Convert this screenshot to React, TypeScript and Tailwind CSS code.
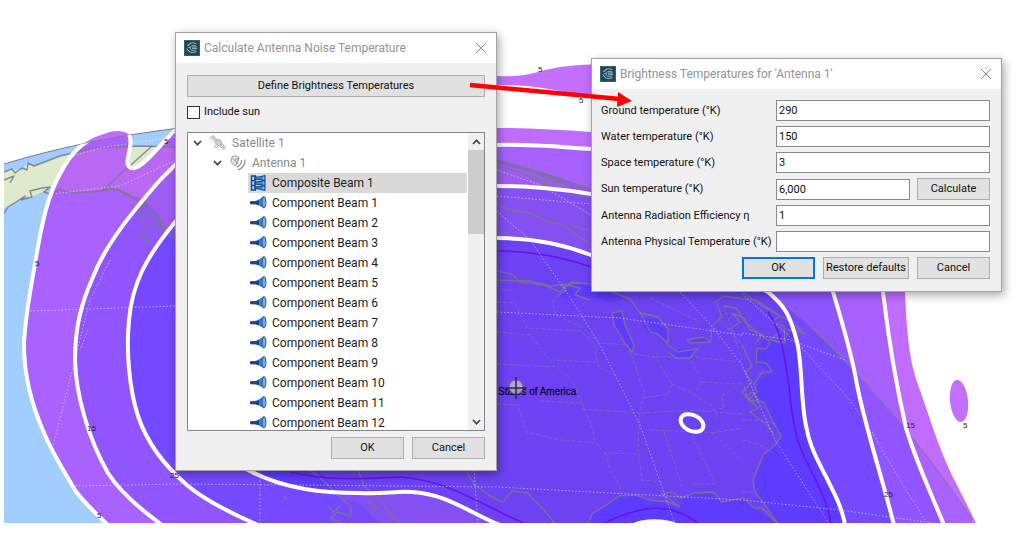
import { useState } from 'react'

var bandEdges = {
  outer: 'M108 525 C94 512 82 500 75 490 C62 468 52 452 45 435 C30 402 24 370 24 345 C25 315 31 288 36 258 C42 222 48 195 60 174 C72 150 86 139 104 134 C113 130 125 130 129 135 C133 141 129 150 128 158 C126 165 129 169 135 168 C147 163 158 147 175 130 C230 70 400 124 497 128 C530 128 560 130 591 132 C760 150 898 170 905 292 C907 335 909 362 920 390 C932 425 942 458 958 487 L977 525 Z',
  b: 'M162 525 C140 509 120 492 108 473 C88 438 76 395 75 360 C75 325 82 302 93 277 C106 243 135 209 160 180 L176 164 C240 120 400 143 497 145 C530 144 560 147 591 149 C760 160 865 200 883 292 C888 335 895 380 906 428 C914 455 925 480 944 525 Z',
  c: 'M258 525 C228 512 205 500 188 486 C160 462 146 440 138 416 C129 388 126 350 129 320 C132 285 145 258 176 221 C240 160 400 184 497 186 C530 186 560 189 591 194 C740 215 818 235 833 292 C843 325 853 360 857 385 C866 430 880 470 894 525 Z',
  d: 'M248 470 C285 490 325 493 360 493 C385 494 395 491 412 492 C447 494 468 512 500 525 L634 525 C644 520 664 520 676 525 L845 525 C840 493 812 460 807 430 C800 405 803 360 796 338 C790 316 785 306 768 292 C720 270 640 265 591 255 C560 243 530 238 497 238 C400 240 260 300 248 470 Z',
}

var bands = [
  { fill: '#ab3cff', d: bandEdges.outer + bandEdges.b },
  { fill: '#8a2cff', d: bandEdges.b + bandEdges.c },
  { fill: '#661cff', d: bandEdges.c + bandEdges.d },
  { fill: '#450aff', d: bandEdges.d },
]

var horizonArc = 'M4 164 C60 147 120 135 180 128 C290 118 400 130 497 160 C620 190 700 240 772 295 C800 315 830 345 853 370 C890 410 930 455 977 527'
var horizon = horizonArc + ' L4 527 Z'

var alaska = 'M4 172 L12 169 L22 170 L28 163 L34 166 L60 156 L95 148 L140 146 L175 147 L230 140 L230 270 L165 232 L158 214 L148 205 L138 199 L125 192 L112 190 L98 191 L72 193 L60 190 L54 192 L50 187 L40 193 L30 198 L25 196 L16 202 L4 208 Z'

var usa = 'M497 163 L530 172 L560 183 L591 197 L772 296 L806 334 L790 330 L783 345 L766 338 L757 348 L756 362 L772 372 L760 380 L754 392 L764 402 L772 420 L781 436 L775 445 L763 455 L757 470 L753 480 L755 492 L765 505 L779 525 L754 508 L744 498 L732 500 L722 502 L713 492 L694 493 L681 498 L680 507 L668 502 L650 500 L636 495 L619 496 L608 504 L592 514 L588 525 L480 525 L400 525 L380 523 L358 502 L345 500 L320 470 L400 300 Z'

var lakes = [
  'M556 296 L566 288 L575 282 L590 284 L612 292 L624 298 L612 303 L596 298 L580 297 L566 299 Z',
  'M612 313 L622 311 L625 325 L634 345 L632 352 L624 342 L614 325 Z',
  'M638 317 L658 319 L668 331 L667 341 L656 333 L648 333 Z',
  'M671 354 L682 348 L697 350 L690 357 L677 358 Z',
  'M687 340 L704 337 L711 342 L690 343 Z',
]

var coasts = [
  'M4 172 L12 169 L15 173 L22 168 L27 170 L28 163 L34 166 L60 156 L95 148 L140 146 L175 147',
  'M4 180 L14 176 L10 183 M4 214 L8 207 L16 202 L25 196 L21 200 L32 197 L30 191 L42 188 L50 187 L44 192 L54 195 L58 189 L72 193 L88 192 L100 191 L114 189 L128 194 L136 200 L146 203 L152 212 L160 222 L166 234 L176 240',
  'M152 146 L102 191',
  'M104 190 L110 187 L114 191 L118 189 L126 195 L138 198 L144 206 L138 210 L147 216 L151 214 L155 221 L160 218 L165 227 L172 230 L176 222',
  'M130 205 L140 212 L144 224 L153 230 L158 224 L166 238 M140 232 L148 236 L146 243 L141 238 Z',
  'M497 160 L530 171 L560 181 L591 190 M497 166 L520 172 L545 184 L591 198 M530 172 L556 177 L566 184 L540 180 Z',
  'M497 205 L512 210 L530 213 L548 222 L562 224 L572 232 L591 244 M574 226 L588 230',
  'M497 271 L512 274 L520 282 L545 285 L560 292 L572 282 L590 284 L612 292 L630 299 L640 313 L658 317 L668 329 L668 345 L678 352 L697 349 L690 358 L676 358 L668 352',
  'M490 280 L530 281 L550 286 L580 283 M556 297 L566 290 L562 284 L580 288 L575 295 L590 300 M612 313 L622 311 L625 325 L634 345 L632 352 L624 342 L614 325 Z',
  'M640 312 L650 332 L658 334 L667 343 M687 340 L704 337 L711 342 L690 343 L687 340 M711 340 L712 326 L722 317 L716 302 L724 296 L742 299',
  'M724 306 L736 308 L745 322 L760 334 L770 342 L766 349 L757 348 L756 362 L766 363 L772 372 L762 372 L754 384 L757 392 L748 400 L764 402 L772 420 L781 436 L775 445 L763 455 L757 470 L753 480 L755 492 L765 505 L779 525',
  'M742 299 L756 300 L774 312 L792 323 L806 334 L788 330 M728 330 L740 322 L732 313 L744 318 L750 330 L762 334 L756 343 M740 290 L762 306 L780 316 L772 322 L784 326 L785 343 L770 340 L780 332',
  'M742 345 L752 366 L745 372 L752 382 L742 392 L758 408 L750 412 L766 424 L774 434 M745 398 L752 392 L758 400 M744 386 L748 400 L755 404',
  'M779 525 L762 508 L754 508 L744 498 L732 500 L722 502 L713 492 L694 493 L681 498 L672 492 L662 494 L680 507 L668 502 L650 500 L636 495 L619 496 L608 504 L592 514 L588 525',
  'M490 496 L503 502 L512 491 L528 493 L540 506 L555 523 M310 470 L325 482 L340 497 L352 508 L350 516 L338 512 L330 518 L342 523 M358 470 L364 486 L380 500 L392 516 L400 523',
  'M328 506 L334 512 L340 506 M368 500 L376 508 L372 514 M284 496 L287 500',
  'M466 470 L474 484 L490 496',
]

var borders = [
  'M497 302 L515 303 L527 328 L580 331 L594 343 L598 366 L617 376',
  'M497 332 L530 335 L550 360 L597 362 M497 364 L558 367 L572 380 L582 405',
  'M497 404 L518 405 L526 432 L560 440 L596 443 L604 453 L640 454',
  'M540 401 L582 403 L590 421 L596 443 M606 453 L610 470 L620 485 L620 496',
  'M582 409 L640 413 L690 410 L742 414 M640 413 L638 448 L642 480 L662 482',
  'M502 290 L514 290 M552 299 L556 315 L580 326 L600 343 L628 345 L644 392 L640 410',
  'M644 398 L668 394 L672 384 L655 357 L632 354 M672 384 L690 392 L712 406 L718 420',
  'M656 356 L690 359 L702 380 L696 392 M690 357 L742 362 M702 382 L742 384 M650 430 L712 433 L742 460',
  'M664 432 L682 486 M692 436 L708 468 L716 484 L690 484 M735 386 L722 396 L724 408 L712 410 M712 433 L742 428',
  'M742 420 L760 420 L776 424 M742 440 L758 444 L772 452 M650 298 L700 322 M742 492 L756 492 M724 306 L742 360 M718 318 L742 344',
]

var graticule = [
  'M60 160 L100 148 L140 142 L176 137',
  'M52 194 L120 186 L176 160',
  'M30 311 L176 306 M88 330 L80 350 M110 260 L90 300 L52 450',
  'M75 486 L176 484 L300 485 L497 487 L742 500 L840 510 L940 524',
  'M260 470 L260 524 M474 470 L478 524',
  'M497 170 L540 185 L591 215 M497 196 L591 204 M497 211 L530 240 L570 297 L600 345 L640 425 L675 524',
  'M497 312 L620 318 L742 335',
  'M680 292 L712 326 L742 365 L775 440 L828 522',
  'M742 333 L790 340 L845 360 M742 294 L800 346 L850 400 L860 415 M872 432 L900 480 L925 520',
]

var contourLines = [
  'M290 472 C330 482 370 478 400 477 C450 480 480 505 528 525',
  'M600 525 C635 508 668 498 700 525',
  'M497 251 C530 251 560 256 591 267',
  'M768 312 C784 335 784 360 789 385 C792 420 796 440 804 456 C815 480 828 500 831 525',
]

var mapLabels = [
  { x: 35, y: 266, text: '5' },
  { x: 164, y: 144, text: '5' },
  { x: 97, y: 518, text: '5' },
  { x: 87, y: 431, text: '15' },
  { x: 170, y: 478, text: '25' },
  { x: 538, y: 72, text: '5' },
  { x: 579, y: 103, text: '5' },
  { x: 906, y: 428, text: '15' },
  { x: 884, y: 497, text: '25' },
  { x: 963, y: 428, text: '5' },
]

function CoverageMap() {
  return (
    <svg className="absolute inset-0 h-full w-full" viewBox="0 0 1024 540" preserveAspectRatio="xMinYMin slice" aria-hidden="true">
      <defs>
        <clipPath id="mapFrame"><rect x="4" y="0" width="1016" height="523" /></clipPath>
        <clipPath id="globe"><path d={horizon} /></clipPath>
      </defs>
      <g clipPath="url(#mapFrame)">
        <path d={horizon} fill="#a2cdff" />
        <g clipPath="url(#globe)" fill="#dfeacb">
          <path d={alaska} />
          <path d={usa} />
          {lakes.map(function(d) { return <path key={d} d={d} fill="#a2cdff" /> })}
        </g>
        {bands.map(function(band) {
          return <path key={band.fill} d={band.d} fill={band.fill} fillOpacity="0.75" fillRule="evenodd" />
        })}
        <path d="M497 76 C520 77 532 74 545 70 C562 66 576 65 600 64 L600 100 C560 90 530 84 497 85 Z" fill="#c56fff" />
        <ellipse cx="959" cy="401" rx="9" ry="21" transform="rotate(-6 959 401)" fill="#c56fff" />
        <path d={horizonArc} fill="none" stroke="#7c7a85" strokeWidth="1" />
        <g fill="none" stroke="#7d788c" strokeOpacity="0.85" strokeLinejoin="round">
          {coasts.map(function(d) { return <path key={d} d={d} strokeWidth="1.4" /> })}
        </g>
        <g fill="none" stroke="#857a9c" strokeOpacity="0.65" strokeDasharray="4 2">
          {borders.map(function(d) { return <path key={d} d={d} /> })}
        </g>
        <g fill="none" stroke="#6a10f0" strokeWidth="1.6">
          {contourLines.map(function(d) { return <path key={d} d={d} /> })}
        </g>
        <g fill="none" stroke="#fff" strokeWidth="4">
          <path d={bandEdges.outer} clipPath="url(#globe)" />
          <path d={bandEdges.b} />
          <path d={bandEdges.c} />
          <path d={bandEdges.d} />
          <ellipse cx="692" cy="423" rx="12" ry="8" transform="rotate(25 692 423)" />
        </g>
        <g fill="none" stroke="#fff" strokeOpacity="0.5" strokeDasharray="1.5 2">
          {graticule.map(function(d) { return <path key={d} d={d} /> })}
        </g>
        <g className="font-['Liberation_Sans'] text-[8px]" fill="#2a1d3a">
          {mapLabels.map(function(l) {
            return <text key={l.x + '-' + l.y} x={l.x} y={l.y}>{l.text}</text>
          })}
        </g>
        <text x="498" y="395" className="font-['Liberation_Sans'] text-[10px]" fill="#150a33" stroke="#150a33" strokeWidth="0.3">States of America</text>
        <circle cx="516" cy="387" r="7" fill="#c9c3dc" fillOpacity="0.75" stroke="#6d6781" />
        <path d="M516 377 V399 M506 388 H527" stroke="#2d2940" strokeWidth="1.5" />
      </g>
    </svg>
  )
}

function AppIcon() {
  return (
    <svg className="h-4 w-4 shrink-0" viewBox="0 0 16 16" fill="none" aria-hidden="true">
      <rect width="16" height="16" fill="#1d4757" />
      <rect x="0.5" y="0.5" width="15" height="15" stroke="#39606f" />
      <path d="M12.500 4 C9 1.500 5 3 4 6 M3 8.500 C4 12 8.500 14 12.500 11.500 M12 6 C9.500 4.500 6.500 5.500 6 8 C6.500 10.500 9.500 11.500 12 9.800 M8 7 H13 M8 8.600 H13" stroke="#a9c6d0" strokeWidth="0.9" />
      <path d="M3 6 L7 3 M3 9 L6 12 M4 7.500 H6.500" stroke="#a9c6d0" strokeWidth="0.8" />
    </svg>
  )
}

function SatelliteIcon() {
  return (
    <svg className="h-4 w-4 shrink-0" viewBox="0 0 16 16" fill="none" stroke="#b0b0b0" aria-hidden="true">
      <path d="M0.500 2.500 L3 0.500 L7 4.500 L4.500 6.500 Z M2 1.500 L6 5.500 M2.500 4.500 L5 2.500" fill="#ececec" />
      <path d="M10 11 L12 8.500 L15.500 12.500 L13.500 15 Z M11 10 L14.500 13.500 M11.500 13 L13.700 10.500" fill="#ececec" />
      <circle cx="8.500" cy="7.500" r="3" fill="#d0d0d0" />
      <path d="M6 9.500 L4.500 11.500 M8 10.500 L6.500 12.500 M4 10.500 Q4.500 13 7.500 13" />
    </svg>
  )
}

function AntennaIcon() {
  return (
    <svg className="h-4 w-4 shrink-0" viewBox="0 0 16 16" fill="none" stroke="#9c9c9c" aria-hidden="true">
      <path d="M2 2 C-0.500 6 2 10 6 10.500 L9 2.500 C7 0.500 3.500 0.500 2 2 Z" fill="#e2e2e2" />
      <path d="M2.500 3 L8 9 M8.500 3 L4 6 M6 10.500 L9 2.500" />
      <path d="M11.500 5 Q12 9.500 7 12 M14.700 4.500 Q15.500 12 8 15" strokeWidth="1.400" />
    </svg>
  )
}

function CompositeIcon() {
  return (
    <svg className="h-4 w-[17px] shrink-0" viewBox="0 0 17 16" aria-hidden="true">
      <path d="M1 1 H6 M1 15 H6 M1.500 0.500 V15.500 M5 0.500 V15.500 M1 5.500 H5 M1 10.500 H5" stroke="#0d4a9c" strokeWidth="1.500" fill="none" />
      <path d="M5 2 L9 2 L15 0.500 V5.500 L9 4.500 L5 4.500 Z M5 7 L9 6.500 L15 5.500 V10.500 L9 9.500 L5 9 Z M5 12 L9 11.500 L15 10.500 V15.500 L9 14 L5 13.500 Z" fill="#3d83d6" stroke="#0d3f85" />
      <path d="M13.500 1.500 V4.500 M13.500 6.500 V9.500 M13.500 11.500 V14.500" stroke="#7db2ee" strokeWidth="1.500" />
    </svg>
  )
}

function HornIcon() {
  return (
    <svg className="h-4 w-[17px] shrink-0" viewBox="0 0 17 16" aria-hidden="true">
      <path d="M0.500 6.500 H5 C8 6 11 3.500 14 1.500 V13 C11 11 8 9.300 5 9 H0.500 Z" fill="#3f80d0" stroke="#1f519a" strokeWidth="0.700" />
      <path d="M0.500 6.500 H5 L9 5 V10 L5 9 H0.500 Z" fill="#1a4680" />
      <ellipse cx="14" cy="7.300" rx="1.900" ry="5.700" fill="#79adea" stroke="#2458a0" strokeWidth="1" />
    </svg>
  )
}

function Chevron({ up }: { up?: boolean }) {
  return (
    <svg className="h-2 w-[9px] shrink-0" viewBox="0 0 9 8" fill="none" stroke="#4a4a4a" strokeWidth="1.800" aria-hidden="true">
      <path d={up ? 'M1 6 L4.500 2.300 L8 6' : 'M1 2 L4.500 5.700 L8 2'} />
    </svg>
  )
}

function TitleBar({ title }: { title: string }) {
  return (
    <div className="flex h-[30px] items-center bg-white pr-[7px] pl-2 text-[12px] text-[#949494]">
      <AppIcon />
      <h2 className="ml-1 flex-1 whitespace-nowrap">{title}</h2>
      <button type="button" aria-label="Close" className="flex h-4 w-4 items-center justify-center">
        <svg className="h-3 w-3" viewBox="0 0 12 12" fill="none" stroke="#8e8e8e" aria-hidden="true">
          <path d="M1 1 L11 11 M11 1 L1 11" />
        </svg>
      </button>
    </div>
  )
}

var buttonClass = 'h-[22px] shrink-0 whitespace-nowrap border border-[#adadad] bg-[#e1e1e1] text-[11px] leading-4 text-[#111]'
var inputClass = 'h-[21px] min-w-0 flex-1 border border-[#8a8a8a] bg-white px-0.5 text-[11px] text-[#111] outline-none'
var windowClass = "absolute flex flex-col border border-[#a3a3a3] bg-[#f0f0f0] font-['Roboto',sans-serif] shadow-[2px_3px_9px_rgba(0,0,0,0.35)]"

function NoiseDialog() {
  var [sun, setSun] = useState(false)
  var [selected, setSelected] = useState('Composite Beam 1')
  var beams = ['Composite Beam 1']
  for (var i = 1; i <= 12; i++) beams.push('Component Beam ' + i)

  return (
    <section className={windowClass + ' top-8 left-[175px] w-[322px]'}>
      <TitleBar title="Calculate Antenna Noise Temperature" />
      <div className="flex flex-col px-[11px] pt-3 pb-[11px]">
        <button type="button" className={buttonClass}>Define Brightness Temperatures</button>
        <label className="mt-1.5 flex h-[18px] items-center gap-1 text-[11px] text-[#111]">
          <input type="checkbox" checked={sun} onChange={function(e) { setSun(e.target.checked) }}
                 className="h-[13px] w-[13px] appearance-none border border-[#333] bg-white checked:bg-[#555]" />
          Include sun
        </label>
        <div className="mt-[11px] flex h-[299px] overflow-hidden border border-[#828790] bg-white text-[12px]">
          <ul className="min-w-0 flex-1 text-[#8a8a8a]">
            <li className="flex h-5 items-center pl-[5px]">
              <Chevron /><span className="ml-2 flex items-center gap-1.5"><SatelliteIcon />Satellite 1</span>
            </li>
            <li className="flex h-5 items-center pl-[25px]">
              <Chevron /><span className="ml-2 flex items-center gap-1.5"><AntennaIcon />Antenna 1</span>
            </li>
            {beams.map(function(beam) {
              return (
                <li key={beam} className="pl-[60px]">
                  <button type="button" onClick={function() { setSelected(beam) }}
                          className={'flex h-5 w-full items-center gap-[5px] pl-0.5 text-[#1c1c1c] ' + (selected === beam ? 'bg-[#d9d9d9]' : '')}>
                    {beam === 'Composite Beam 1' ? <CompositeIcon /> : <HornIcon />}
                    {beam}
                  </button>
                </li>
              )
            })}
          </ul>
          <div className="ml-px flex w-4 flex-col items-center bg-[#f0f0f0]">
            <div className="flex h-[17px] items-center"><Chevron up /></div>
            <div className="h-[84px] w-full bg-[#cdcdcd]" />
            <div className="mt-auto flex h-[17px] items-center"><Chevron /></div>
          </div>
        </div>
        <div className="mt-1.5 flex justify-end gap-2">
          <button type="button" className={buttonClass + ' w-[73px]'}>OK</button>
          <button type="button" className={buttonClass + ' w-[73px]'}>Cancel</button>
        </div>
      </div>
    </section>
  )
}

var fields = [
  { id: 'ground', label: 'Ground temperature (°K)', value: '290' },
  { id: 'water', label: 'Water temperature (°K)', value: '150' },
  { id: 'space', label: 'Space temperature (°K)', value: '3' },
  { id: 'sun', label: 'Sun temperature (°K)', value: '6,000' },
  { id: 'efficiency', label: 'Antenna Radiation Efficiency η', value: '1' },
  { id: 'physical', label: 'Antenna Physical Temperature (°K)', value: '' },
]

function BrightnessDialog() {
  return (
    <section className={windowClass + ' top-[58px] left-[591px] w-[411px]'}>
      <TitleBar title="Brightness Temperatures for 'Antenna 1'" />
      <form className="flex flex-col gap-[5px] pt-[11px] pr-[11px] pb-3 pl-[9px]">
        {fields.map(function(f) {
          return (
            <div key={f.id} className="flex items-center">
              <label htmlFor={f.id} className="w-[175px] shrink-0 text-[11px] leading-4 whitespace-nowrap text-[#111]">{f.label}</label>
              <input id={f.id} defaultValue={f.value} className={inputClass} />
              {f.id === 'sun' && <button type="button" className={buttonClass + ' ml-[7px] w-[73px]'}>Calculate</button>}
            </div>
          )
        })}
        <div className="flex justify-end gap-2">
          <button type="button" className="h-[22px] w-[73px] shrink-0 border-2 border-[#0078d7] bg-[#e1e1e1] text-[11px] leading-4 text-[#111]">OK</button>
          <button type="button" className={buttonClass + ' w-[86px]'}>Restore defaults</button>
          <button type="button" className={buttonClass + ' w-[73px]'}>Cancel</button>
        </div>
      </form>
    </section>
  )
}

export default function App() {
  return (
    <main className="relative min-h-screen overflow-hidden bg-white">
      <CoverageMap />
      <NoiseDialog />
      <BrightnessDialog />
      {/* callout from the button to the dialog it opens */}
      <svg className="pointer-events-none absolute top-[78px] left-[468px] h-8 w-[166px]" viewBox="0 0 166 32" aria-hidden="true">
        <path d="M2 7 L152 21" stroke="#f00" strokeWidth="4.500" />
        <path d="M150 14 L164 23 L149 29 Z" fill="#f00" />
      </svg>
    </main>
  )
}
